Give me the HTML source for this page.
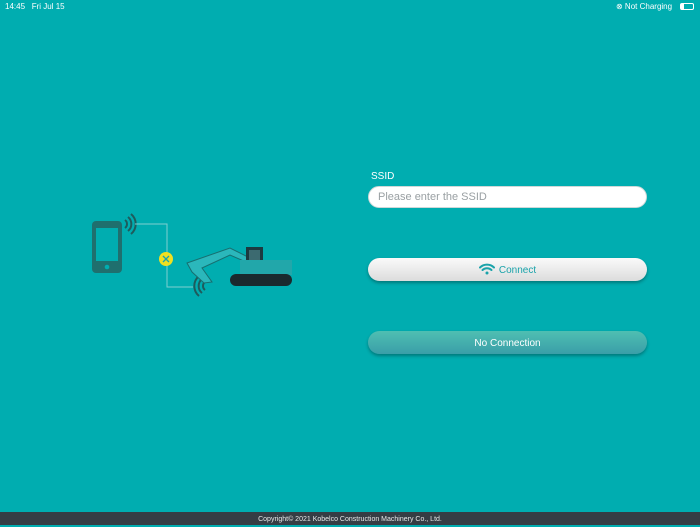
<!DOCTYPE html>
<html><head><meta charset="utf-8"><style>
*{margin:0;padding:0;box-sizing:border-box}
body{width:700px;height:525px;background:#00adb0;font-family:"Liberation Sans",sans-serif;position:relative;overflow:hidden;color:#fff}
.sb{position:absolute;top:2px;font-size:8px;color:#fff}
.lbl{position:absolute;left:371px;top:171px;font-size:10px}
.in{position:absolute;left:368px;top:186px;width:279px;height:22px;border-radius:11px;background:#fff;border:1px solid #cfd8d8;color:#9aa0a3;font-size:11px;line-height:21px;padding-left:9px}
.btn{position:absolute;left:368px;width:279px;height:23px;border-radius:12px;font-size:10px;text-align:center;line-height:25px;box-shadow:0 2px 3px rgba(0,0,0,.3)}
.c{top:258px;background:linear-gradient(#fafafa,#dcdcdc);color:#1aa3aa}
.n{top:331px;background:linear-gradient(#4fbfb2,#3a9ea8);color:#fff}
.ft{position:absolute;left:0;top:512px;width:700px;height:13px;background:#353d44;font-size:7px;text-align:center;line-height:15px;color:#e8e8e8}
</style></head><body>
<div class="sb" style="left:5px">14:45&nbsp;&nbsp;&nbsp;Fri Jul 15</div>
<div class="sb" style="left:616px">⊗ Not Charging</div>
<div style="position:absolute;left:680px;top:3px;width:14px;height:7px;border:1px solid #fff;border-radius:2px"><div style="width:3px;height:5px;background:#fff"></div></div>
<svg style="position:absolute;left:80px;top:210px" width="220" height="90" viewBox="0 0 220 90">
<rect x="12" y="11" width="30" height="52" rx="4" fill="#1f6f6e"/>
<rect x="16" y="18" width="22" height="33" fill="#00adb0"/>
<circle cx="27" cy="57" r="2.3" fill="#00adb0"/>
<g fill="none" stroke="#1f5b5c" stroke-width="2"><path d="M45 10a5 5 0 0 1 0 8"/><path d="M48 7a9 9 0 0 1 0 14"/><path d="M51 4a13 13 0 0 1 0 20"/>
<path d="M125 72a5 5 0 0 0 0 8"/><path d="M122 69a9 9 0 0 0 0 14"/><path d="M119 66a13 13 0 0 0 0 20"/></g>
<path d="M55 14H87V77H113" fill="none" stroke="#7fcfd0" stroke-width="1"/>
<circle cx="86" cy="49" r="7" fill="#f0e020"/>
<path d="M83 46l6 6M89 46l-6 6" stroke="#1aa3aa" stroke-width="1.3"/>
<path d="M107 53L150 38L168 47L166 52L150 45L122 58L132 72L124 73L112 62Z" fill="#2bb7bb" stroke="#176f70" stroke-width="1"/>
<rect x="166" y="37" width="17" height="25" fill="#1c3a40"/>
<rect x="169" y="40" width="11" height="12" fill="#3c6a70"/>
<rect x="160" y="50" width="52" height="15" fill="#22a7aa"/>
<rect x="150" y="64" width="62" height="12" rx="6" fill="#1a2a2e"/>
</svg>
<div class="lbl">SSID</div>
<div class="in">Please enter the SSID</div>
<div class="btn c"><svg width="16" height="12" viewBox="0 0 16 12" style="vertical-align:-2px;margin-right:4px"><g fill="none" stroke="#1aa3aa" stroke-width="2" stroke-linecap="round"><path d="M1 4.5a10 10 0 0 1 14 0"/><path d="M3.5 7a6.5 6.5 0 0 1 9 0"/></g><circle cx="8" cy="10" r="1.5" fill="#1aa3aa"/></svg>Connect</div>
<div class="btn n">No Connection</div>
<div class="ft">Copyright© 2021 Kobelco Construction Machinery Co., Ltd.</div>
</body></html>
